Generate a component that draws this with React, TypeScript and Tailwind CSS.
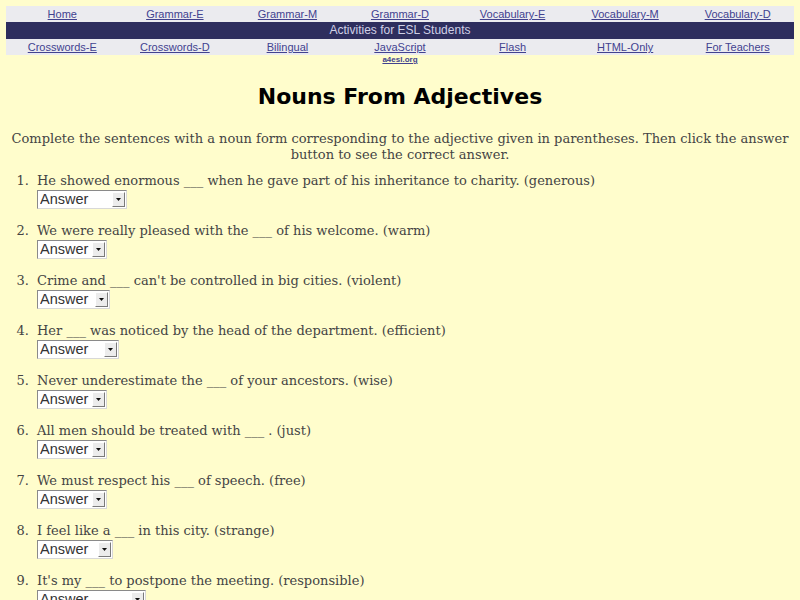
import { useState } from 'react';

const topLinks = ['Home', 'Grammar-E', 'Grammar-M', 'Grammar-D', 'Vocabulary-E', 'Vocabulary-M', 'Vocabulary-D'];
const bottomLinks = ['Crosswords-E', 'Crosswords-D', 'Bilingual', 'JavaScript', 'Flash', 'HTML-Only', 'For Teachers'];

interface Question {
  text: string;
  answer: string;
  width: string;
}

const questions: Question[] = [
  { text: 'He showed enormous ___ when he gave part of his inheritance to charity. (generous)', answer: 'generosity', width: 'w-[90px]' },
  { text: 'We were really pleased with the ___ of his welcome. (warm)', answer: 'warmth', width: 'w-[70px]' },
  { text: "Crime and ___ can't be controlled in big cities. (violent)", answer: 'violence', width: 'w-[73px]' },
  { text: 'Her ___ was noticed by the head of the department. (efficient)', answer: 'efficiency', width: 'w-[82px]' },
  { text: 'Never underestimate the ___ of your ancestors. (wise)', answer: 'wisdom', width: 'w-[70px]' },
  { text: 'All men should be treated with ___ . (just)', answer: 'justice', width: 'w-[70px]' },
  { text: 'We must respect his ___ of speech. (free)', answer: 'freedom', width: 'w-[70px]' },
  { text: 'I feel like a ___ in this city. (strange)', answer: 'stranger', width: 'w-[76px]' },
  { text: "It's my ___ to postpone the meeting. (responsible)", answer: 'responsibility', width: 'w-[109px]' },
];

function NavRow({ links }: { links: string[] }) {
  return (
    <div className="grid grid-cols-7 bg-[#ebebef] h-[16px] items-center">
      {links.map(l => (
        <a key={l} href="#" className="text-center text-[11px] leading-[16px] text-[#42428f] underline">
          {l}
        </a>
      ))}
    </div>
  );
}

function AnswerSelect({ q }: { q: Question }) {
  const [value, setValue] = useState('');
  return (
    <div className={`relative h-[19px] ${q.width}`}>
      <select
        value={value}
        onChange={e => setValue(e.target.value)}
        className="appearance-none w-full h-full bg-white border border-t-[#8a8a8a] border-l-[#8a8a8a] border-b-[#d8d8d8] border-r-[#d8d8d8] pl-[2px] text-[14.5px] leading-[17px] text-[#333] font-['Liberation_Sans',Arial,sans-serif] outline-none"
      >
        <option value="">Answer</option>
        <option value="a">{q.answer}</option>
      </select>
      <span className="pointer-events-none absolute right-[2px] top-[2px] w-[13px] h-[15px] bg-[#ececec] border border-t-white border-l-white border-b-[#7a7a7a] border-r-[#7a7a7a] flex items-center justify-center">
        <svg width="5" height="3" viewBox="0 0 5 3"><path d="M0 0h5L2.5 3z" fill="#111" /></svg>
      </span>
    </div>
  );
}

export default function App() {
  return (
    <div className="min-h-[600px] bg-[#fffdcc] font-['DejaVu_Serif',Georgia,serif] text-[#444]">
      <div className="pt-[6px] px-[6px]">
        <div className="font-['Liberation_Sans',Arial,sans-serif]">
          <NavRow links={topLinks} />
          <div className="bg-[#2e2e5e] h-[17px] text-center text-[12px] leading-[17px] text-[#d0d0e6]">
            Activities for ESL Students
          </div>
          <NavRow links={bottomLinks} />
          <div className="grid grid-cols-7">
            <span className="col-start-4 text-center text-[8px] leading-[10px] font-bold text-[#42428f] underline">a4esl.org</span>
          </div>
        </div>
      </div>

      <h1 className="mt-[18px] text-center text-[22px] leading-[28px] font-bold text-black font-['DejaVu_Sans',sans-serif]">
        Nouns From Adjectives
      </h1>

      <p className="mt-[20px] px-[8px] text-center text-[13px] leading-[16px]">
        Complete the sentences with a noun form corresponding to the adjective given in parentheses. Then click the answer button to see the correct answer.
      </p>

      <ol className="mt-[9px] flex flex-col gap-[13px]">
        {questions.map((q, i) => (
          <li key={i} className="flex text-[13px] leading-[18px]">
            <span className="w-[37px] pr-[8px] text-right">{i + 1}.</span>
            <div className="flex flex-col">
              <span>{q.text}</span>
              <AnswerSelect q={q} />
            </div>
          </li>
        ))}
      </ol>
    </div>
  );
}
